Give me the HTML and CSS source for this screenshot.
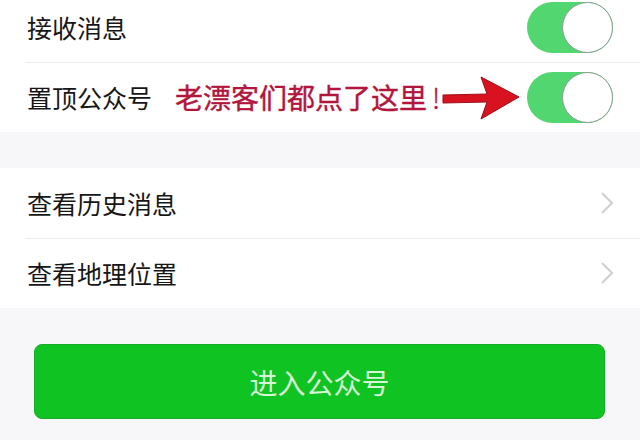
FILE: index.html
```html
<!DOCTYPE html>
<html>
<head>
	<meta charset="utf-8">
	<title>公众号设置</title>
	<link rel="stylesheet" href="styles.css">
</head>
<body>
	<div class="grupo grupo-arriba">
		<div class="fila">
			<span class="texto">接收消息</span>
			<span class="interruptor"><span class="bola"></span></span>
		</div>
		<div class="fila">
			<span class="texto">置顶公众号</span>
			<span class="nota">老漂客们都点了这里<span class="exclama">!</span></span>
			<svg class="flecha" width="80" height="46" viewBox="0 0 80 46">
				<path d="M2 20 L46 19 L40 2 L78 22 L40 44 L46 27 L2 28 Z" fill="#d9121f" stroke="#9e0d1a" stroke-width="1" stroke-linejoin="round"/>
			</svg>
			<span class="interruptor"><span class="bola"></span></span>
		</div>
	</div>

	<div class="grupo">
		<div class="fila">
			<span class="texto">查看历史消息</span>
			<svg class="chevron" width="12" height="22" viewBox="0 0 12 22">
				<polyline points="1,1 11,11 1,21" fill="none" stroke="#cfcfd4" stroke-width="2"/>
			</svg>
		</div>
		<div class="fila">
			<span class="texto">查看地理位置</span>
			<svg class="chevron" width="12" height="22" viewBox="0 0 12 22">
				<polyline points="1,1 11,11 1,21" fill="none" stroke="#cfcfd4" stroke-width="2"/>
			</svg>
		</div>
	</div>

	<div class="acciones">
		<button class="boton">进入公众号</button>
	</div>
</body>
</html>
```

FILE: styles.css
```css
body {
	margin: 0;
	background-color: #f7f6f8;
	font-family: "Noto Sans CJK SC", "Noto Sans", sans-serif;
}

.grupo {
	background-color: #fff;
	margin-top: 36px;
}
.grupo-arriba {
	margin-top: -8px;
}

.fila {
	display: flex;
	align-items: center;
	height: 70px;
	padding: 0 27px;
	position: relative;
}
.fila + .fila::before {
	content: "";
	position: absolute;
	top: 0;
	left: 25px;
	right: 0;
	height: 1px;
	background-color: #ececee;
}

.texto {
	font-size: 25px;
	color: #161616;
}

.nota {
	margin-left: 23px;
	font-size: 28px;
	color: #b2163c;
	-webkit-text-stroke: 0.4px #b2163c;
}
.exclama {
	margin-left: 5px;
	font-weight: 300;
}

.flecha {
	margin-left: auto;
	margin-right: 6px;
	margin-top: 2px;
}

.interruptor {
	width: 86px;
	height: 51px;
	border-radius: 26px;
	background-color: #52d66f;
	display: flex;
	justify-content: flex-end;
}
.fila > .texto + .interruptor {
	margin-left: auto;
}
.bola {
	width: 49px;
	height: 49px;
	border-radius: 50%;
	background-color: #fff;
	border: 1px solid #8e9a92;
}

.chevron {
	margin-left: auto;
}

.acciones {
	padding: 36px 35px 0 34px;
}
.boton {
	display: block;
	width: 100%;
	height: 75px;
	border: 1px solid #1aa82a;
	border-radius: 8px;
	background-color: #0fc322;
	color: #d8f6d6;
	font-family: "Noto Sans CJK SC", "Noto Sans", sans-serif;
	font-size: 28px;
}
```
